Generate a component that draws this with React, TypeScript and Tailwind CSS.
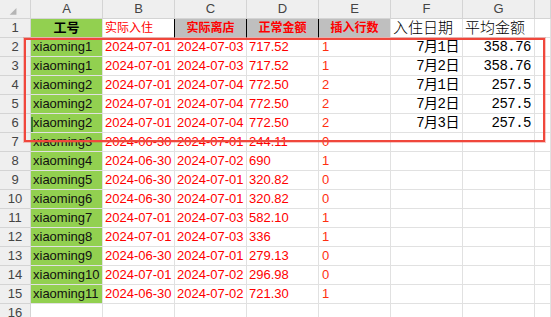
import React from "react"

const sans = "font-['Liberation_Sans','Noto_Sans_CJK_SC',sans-serif]"
const mono = "font-['Liberation_Mono','Noto_Sans_CJK_SC',monospace]"

type Row = [string, string, string, string, string, string?, string?]

const rows: Row[] = [
  ["xiaoming1", "2024-07-01", "2024-07-03", "717.52", "1", "7月1日", "358.76"],
  ["xiaoming1", "2024-07-01", "2024-07-03", "717.52", "1", "7月2日", "358.76"],
  ["xiaoming2", "2024-07-01", "2024-07-04", "772.50", "2", "7月1日", "257.5"],
  ["xiaoming2", "2024-07-01", "2024-07-04", "772.50", "2", "7月2日", "257.5"],
  ["xiaoming2", "2024-07-01", "2024-07-04", "772.50", "2", "7月3日", "257.5"],
  ["xiaoming3", "2024-06-30", "2024-07-01", "244.11", "0"],
  ["xiaoming4", "2024-06-30", "2024-07-02", "690", "1"],
  ["xiaoming5", "2024-06-30", "2024-07-01", "320.82", "0"],
  ["xiaoming6", "2024-06-30", "2024-07-01", "320.82", "0"],
  ["xiaoming7", "2024-07-01", "2024-07-03", "582.10", "1"],
  ["xiaoming8", "2024-07-01", "2024-07-03", "336", "1"],
  ["xiaoming9", "2024-06-30", "2024-07-01", "279.13", "0"],
  ["xiaoming10", "2024-07-01", "2024-07-02", "296.98", "0"],
  ["xiaoming11", "2024-06-30", "2024-07-02", "721.30", "1"],
]

const cell = "border-r border-b border-[#e1e1e1] flex items-center overflow-hidden whitespace-nowrap"
const head = "border-r border-b border-[#d4d4d4] bg-[#efefef] flex items-center justify-center text-[13px] text-[#444]"

function RowHead({ n, selected }: { n: number; selected?: boolean }) {
  return (
    <div className={`${head} ${selected ? "bg-[#dcdcdc] text-[#1e6f5c]" : ""}`}>{n}</div>
  )
}

export default function App() {
  return (
    <div className={`relative w-[551px] h-[317px] overflow-hidden bg-white ${sans}`}>
      <div className="grid grid-cols-[31px_repeat(7,72px)_1fr] auto-rows-[19px]">
        {/* column header row */}
        <div className={`${head} items-start justify-start`}>
          <svg width="31" height="18" viewBox="0 0 31 18">
            <path d="M17 8 L17 15 L10 15 Z" fill="#b5b5b5" />
          </svg>
        </div>
        {["A", "B", "C", "D", "E", "F", "G"].map((c) => (
          <div key={c} className={head}>{c}</div>
        ))}
        <div className={head}></div>

        {/* row 1 */}
        <RowHead n={1} />
        <div className={`${cell} bg-[#92d050] justify-center font-bold text-[13px] text-black`}>工号</div>
        <div className={`${cell} border-r-black pl-[2px] text-[12px] text-[#ff0000]`}>实际入住</div>
        <div className={`${cell} border-r-black bg-[#bfbfbf] justify-center font-bold text-[12px] text-[#ff0000]`}>实际离店</div>
        <div className={`${cell} border-r-black bg-[#bfbfbf] justify-center font-bold text-[12px] text-[#ff0000]`}>正常金额</div>
        <div className={`${cell} bg-[#bfbfbf] justify-center font-bold text-[12px] text-[#ff0000]`}>插入行数</div>
        <div className={`${cell} pl-[2px] text-[15px] font-light text-black`}>入住日期</div>
        <div className={`${cell} pl-[2px] text-[15px] font-light text-black`}>平均金额</div>
        <div className={cell}></div>

        {rows.map((r, i) => {
          const n = i + 2
          const selected = n === 6
          return (
            <React.Fragment key={n}>
              <RowHead n={n} selected={selected} />
              <div className={`${cell} relative bg-[#92d050] pl-[2px] text-[13px] text-[#111]`}>
                {selected && <span className="absolute left-0 top-[3px] bottom-0 w-[2px] bg-[#3a7d2c]" />}
                {r[0]}
              </div>
              <div className={`${cell} pl-[2px] text-[13px] text-[#ff0000]`}>{r[1]}</div>
              <div className={`${cell} pl-[2px] text-[13px] text-[#ff0000]`}>{r[2]}</div>
              <div className={`${cell} pl-[2px] text-[13px] text-[#ff0000]`}>{r[3]}</div>
              <div className={`${cell} pl-[3px] text-[13px] text-[#ff2f10]`}>{r[4]}</div>
              <div className={`${cell} justify-end pr-[3px] ${mono} text-[14px] tracking-[-0.5px] text-black`}>{r[5] ?? ""}</div>
              <div className={`${cell} justify-end pr-[3px] ${mono} text-[14px] tracking-[-0.5px] text-black`}>{r[6] ?? ""}</div>
              <div className={cell}></div>
            </React.Fragment>
          )
        })}

        {/* row 16, partly visible */}
        <RowHead n={16} />
        {Array.from({ length: 8 }).map((_, i) => (
          <div key={i} className={cell}></div>
        ))}
      </div>

      {/* highlight box drawn over the sheet */}
      <div className="absolute left-[24px] top-[38px] w-[521px] h-[104px] border-2 border-[#f0473c] shadow-[0_0_0_1px_rgba(240,71,60,0.3)]" />
    </div>
  )
}
